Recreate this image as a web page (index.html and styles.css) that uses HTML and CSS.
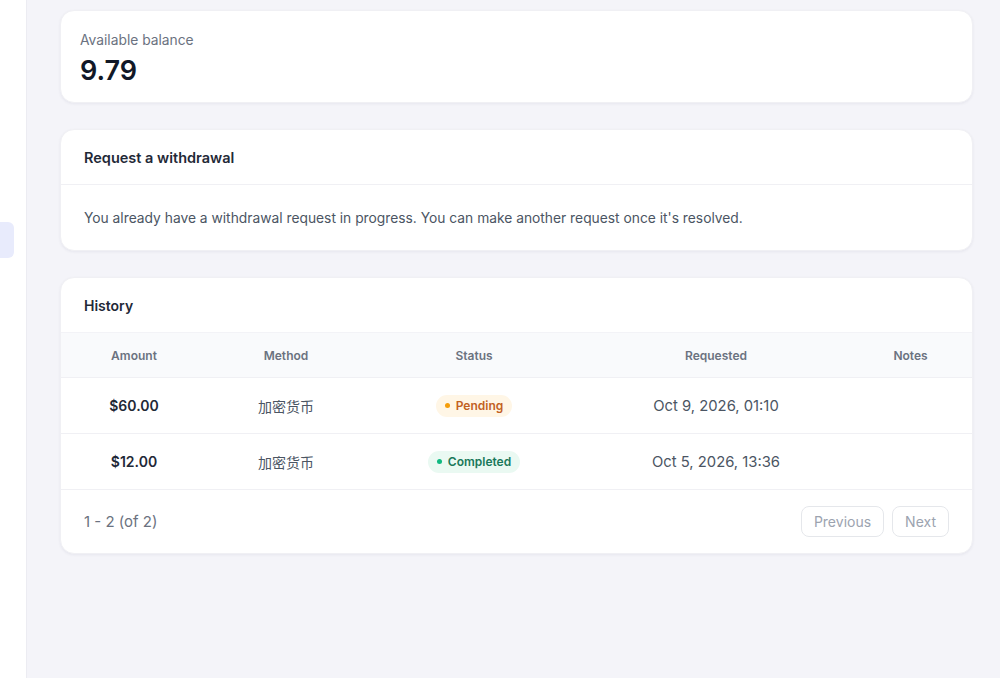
FILE: index.html
```html
<!DOCTYPE html>
<html lang="en">
<head>
  <meta charset="UTF-8">
  <meta name="viewport" content="width=device-width, initial-scale=1.0">
  <title>Withdrawals</title>
  <link rel="stylesheet" href="styles.css">
</head>
<body>
  <div id="app">
    <aside class="sidebar">
      <div class="nav-item active"></div>
    </aside>

    <main class="main">
      <section class="card balance">
        <p class="balance-label">Available balance</p>
        <p class="balance-value">9.79</p>
      </section>

      <section class="card">
        <div class="card-head">Request a withdrawal</div>
        <div class="card-body">
          You already have a withdrawal request in progress. You can make another request once it's resolved.
        </div>
      </section>

      <section class="card">
        <div class="card-head no-line">History</div>
        <table class="history">
          <colgroup>
            <col style="width:146px">
            <col style="width:158px">
            <col style="width:218px">
            <col style="width:266px">
            <col>
          </colgroup>
          <thead>
            <tr>
              <th>Amount</th>
              <th>Method</th>
              <th>Status</th>
              <th>Requested</th>
              <th>Notes</th>
            </tr>
          </thead>
          <tbody>
            <tr>
              <td class="amount">$60.00</td>
              <td class="method">加密货币</td>
              <td><span class="badge pending">Pending</span></td>
              <td class="date">Oct 9, 2026, 01:10</td>
              <td></td>
            </tr>
            <tr>
              <td class="amount">$12.00</td>
              <td class="method">加密货币</td>
              <td><span class="badge completed">Completed</span></td>
              <td class="date">Oct 5, 2026, 13:36</td>
              <td></td>
            </tr>
          </tbody>
        </table>
        <div class="card-foot">
          <span class="range">1 - 2 (of 2)</span>
          <div class="pager">
            <button class="btn" disabled>Previous</button>
            <button class="btn" disabled>Next</button>
          </div>
        </div>
      </section>
    </main>
  </div>
</body>
</html>
```

FILE: styles.css
```css
* {
  margin: 0;
  padding: 0;
  box-sizing: border-box;
}

html, body {
  height: 100%;
}

body {
  font-family: Inter, "Noto Sans", "Noto Sans CJK SC", sans-serif;
  color: #111827;
  background: #f4f4f9;
}

#app {
  display: flex;
  min-height: 100%;
}

.sidebar {
  width: 27px;
  flex-shrink: 0;
  background: #fff;
  border-right: 1px solid #ececf2;
  padding-top: 222px;
}

.nav-item {
  width: 14px;
  height: 36px;
}

.nav-item.active {
  background: #e8ebfc;
  border-radius: 0 6px 6px 0;
}

.main {
  flex: 1;
  padding: 10px 27px 40px 33px;
  display: flex;
  flex-direction: column;
  gap: 26px;
}

.card {
  background: #fff;
  border-radius: 14px;
  border: 1px solid #f0f0f4;
  box-shadow: 0 1px 3px rgba(20, 20, 60, 0.06);
  overflow: hidden;
}

.balance {
  padding: 20px 19px 18px;
  height: 93px;
}

.balance-label {
  font-size: 13.8px;
  color: #6b7280;
  line-height: 19px;
}

.balance-value {
  font-size: 27px;
  font-weight: 600;
  line-height: 32px;
  margin-top: 5px;
  color: #111827;
}

.card-head {
  height: 55px;
  padding: 0 23px;
  display: flex;
  align-items: center;
  font-size: 14.5px;
  font-weight: 600;
  color: #1f2937;
  border-bottom: 1px solid #f0f0f4;
}

.card-head.no-line {
  height: 54px;
  font-size: 14px;
  border-bottom: none;
}

.card-body {
  padding: 0 23px;
  height: 65px;
  display: flex;
  align-items: center;
  font-size: 13.8px;
  color: #4b5563;
}

.history {
  width: 100%;
  border-collapse: collapse;
  table-layout: fixed;
}

.history th {
  height: 45px;
  background: #f9fafc;
  font-size: 12px;
  font-weight: 600;
  color: #6b7280;
  text-align: center;
  border-top: 1px solid #f3f3f7;
  border-bottom: 1px solid #f0f0f4;
}

.history td {
  height: 56px;
  text-align: center;
  font-size: 14px;
  color: #374151;
  border-bottom: 1px solid #f0f0f4;
}

.history td.amount {
  font-weight: 600;
  color: #1f2937;
}

.history td.method {
  color: #4b5563;
}

.history td.date {
  font-size: 14.8px;
  color: #4b5563;
}

.badge {
  display: inline-flex;
  align-items: center;
  gap: 6px;
  height: 22px;
  padding: 0 9px;
  border-radius: 11px;
  font-size: 12px;
  font-weight: 600;
}

.badge::before {
  content: '';
  width: 5px;
  height: 5px;
  border-radius: 50%;
  background: currentColor;
}

.badge.pending {
  background: #fff6e6;
  color: #c2611f;
}

.badge.pending::before {
  background: #f59e0b;
}

.badge.completed {
  background: #eaf9f2;
  color: #19785a;
}

.badge.completed::before {
  background: #10b981;
}

.card-foot {
  height: 63px;
  padding: 0 23px;
  display: flex;
  align-items: center;
  justify-content: space-between;
}

.range {
  font-size: 15px;
  color: #6b7280;
}

.pager {
  display: flex;
  gap: 8px;
}

.btn {
  height: 31px;
  padding: 0 12px;
  font-family: inherit;
  font-size: 14px;
  color: #9ca3af;
  background: #fff;
  border: 1px solid #e5e7eb;
  border-radius: 8px;
}
```
